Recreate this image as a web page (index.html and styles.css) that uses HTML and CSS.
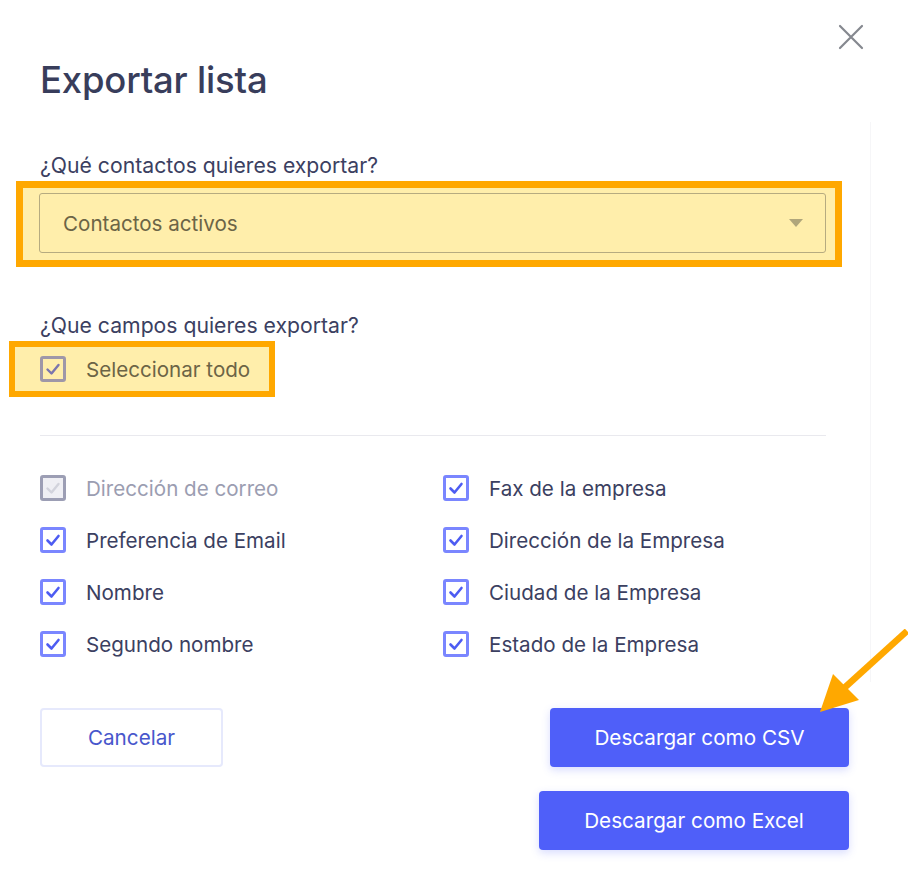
FILE: index.html
```html
<!DOCTYPE html>
<html lang="es">
<head>
<meta charset="utf-8">
<title>Exportar lista</title>
<link rel="stylesheet" href="styles.css">
</head>
<body>
<div class="modal">
  <button class="close" aria-label="Cerrar">
    <svg width="26" height="26" viewBox="0 0 26 26"><path d="M2 2 L24 24 M24 2 L2 24" stroke="#85888f" stroke-width="2.2" stroke-linecap="round" fill="none"/></svg>
  </button>
  <div class="edge-line"></div>

  <h1 class="title">Exportar lista</h1>

  <div class="label label-first">¿Qué contactos quieres exportar?</div>
  <div class="hl hl-select">
    <div class="select">
      <span>Contactos activos</span>
      <span class="caret"></span>
    </div>
  </div>

  <div class="label label-second">¿Que campos quieres exportar?</div>
  <div class="hl hl-all">
    <span class="cb cb-all"><svg viewBox="0 0 20 20"><path d="M4.5 10.5 L8.5 14.5 L15.5 6" fill="none" stroke="#7b76ad" stroke-width="2.4" stroke-linecap="round" stroke-linejoin="round"/></svg></span>
    <span class="hl-text">Seleccionar todo</span>
  </div>

  <div class="divider"></div>

  <div class="grid">
    <div class="item disabled"><span class="cb cb-dis"><svg viewBox="0 0 20 20"><path d="M4.5 10.5 L8.5 14.5 L15.5 6" fill="none" stroke="#d2d3dc" stroke-width="2.4" stroke-linecap="round" stroke-linejoin="round"/></svg></span>Dirección de correo</div>
    <div class="item"><span class="cb"><svg viewBox="0 0 20 20"><path d="M4.5 10.5 L8.5 14.5 L15.5 6" fill="none" stroke="#4d5cf2" stroke-width="2.6" stroke-linecap="round" stroke-linejoin="round"/></svg></span>Fax de la empresa</div>
    <div class="item"><span class="cb"><svg viewBox="0 0 20 20"><path d="M4.5 10.5 L8.5 14.5 L15.5 6" fill="none" stroke="#4d5cf2" stroke-width="2.6" stroke-linecap="round" stroke-linejoin="round"/></svg></span>Preferencia de Email</div>
    <div class="item"><span class="cb"><svg viewBox="0 0 20 20"><path d="M4.5 10.5 L8.5 14.5 L15.5 6" fill="none" stroke="#4d5cf2" stroke-width="2.6" stroke-linecap="round" stroke-linejoin="round"/></svg></span>Dirección de la Empresa</div>
    <div class="item"><span class="cb"><svg viewBox="0 0 20 20"><path d="M4.5 10.5 L8.5 14.5 L15.5 6" fill="none" stroke="#4d5cf2" stroke-width="2.6" stroke-linecap="round" stroke-linejoin="round"/></svg></span>Nombre</div>
    <div class="item"><span class="cb"><svg viewBox="0 0 20 20"><path d="M4.5 10.5 L8.5 14.5 L15.5 6" fill="none" stroke="#4d5cf2" stroke-width="2.6" stroke-linecap="round" stroke-linejoin="round"/></svg></span>Ciudad de la Empresa</div>
    <div class="item"><span class="cb"><svg viewBox="0 0 20 20"><path d="M4.5 10.5 L8.5 14.5 L15.5 6" fill="none" stroke="#4d5cf2" stroke-width="2.6" stroke-linecap="round" stroke-linejoin="round"/></svg></span>Segundo nombre</div>
    <div class="item"><span class="cb"><svg viewBox="0 0 20 20"><path d="M4.5 10.5 L8.5 14.5 L15.5 6" fill="none" stroke="#4d5cf2" stroke-width="2.6" stroke-linecap="round" stroke-linejoin="round"/></svg></span>Estado de la Empresa</div>
  </div>

  <div class="actions">
    <button class="btn btn-cancel">Cancelar</button>
    <div class="primary-stack">
      <button class="btn btn-primary btn-csv">Descargar como CSV</button>
      <button class="btn btn-primary btn-excel">Descargar como Excel</button>
    </div>
  </div>

  <svg class="arrow" width="100" height="95" viewBox="0 0 100 95">
    <line x1="97" y1="2" x2="32" y2="61" stroke="#ffa800" stroke-width="6.5" stroke-linecap="butt"/>
    <polygon points="10,83 23,45 49,71" fill="#ffa800"/>
  </svg>
</div>
</body>
</html>
```

FILE: styles.css
```css
* { box-sizing: border-box; }

html, body {
  margin: 0;
  padding: 0;
  background: #ffffff;
}

body {
  font-family: Inter, "Noto Sans", "Liberation Sans", sans-serif;
  color: #3b4061;
  width: 908px;
  height: 877px;
  overflow: hidden;
}

.modal {
  position: relative;
  padding: 56px 0 0 40px;
  width: 908px;
  height: 877px;
}

.close {
  position: absolute;
  left: 838px;
  top: 24px;
  width: 26px;
  height: 26px;
  padding: 0;
  border: 0;
  background: transparent;
}
.close svg { display: block; }

.edge-line {
  position: absolute;
  left: 870px;
  top: 122px;
  width: 1px;
  height: 560px;
  background: #f6f6f8;
}

.title {
  margin: 0;
  font-size: 36.5px;
  font-weight: 500;
  line-height: 48px;
  color: #383d5b;
  letter-spacing: -0.2px;
}

.label {
  font-size: 21.2px;
  line-height: 26px;
  font-weight: 400;
  color: #3b4061;
}
.label-first { margin-top: 48px; }
.label-second { margin-top: 45px; }

.hl {
  background: #ffeeab;
  border: 7px solid #ffa800;
}

.hl-select {
  margin-left: -24px;
  width: 826px;
  height: 86px;
  margin-top: 3px;
  padding: 5px 9px 0 16px;
}

.select {
  height: 60px;
  border: 1px solid #b6ab80;
  border-radius: 3px;
  display: flex;
  align-items: center;
  justify-content: space-between;
  padding: 0 22px 0 23px;
  font-size: 20.6px;
  color: #6c6446;
}

.caret {
  width: 0;
  height: 0;
  border-left: 7px solid transparent;
  border-right: 7px solid transparent;
  border-top: 8px solid #b0a67b;
}

.hl-all {
  margin-left: -31px;
  margin-top: 3px;
  width: 266px;
  height: 56px;
  border-width: 6px;
  display: flex;
  align-items: center;
  padding-left: 25px;
  gap: 20px;
  font-size: 20.6px;
  color: #6c6446;
}

.cb {
  width: 26px;
  height: 26px;
  flex: none;
  border: 3px solid #7a86ff;
  border-radius: 3px;
  display: inline-flex;
  align-items: center;
  justify-content: center;
  background: #ffffff;
}
.cb svg { width: 20px; height: 20px; display: block; }

.cb-all {
  border-color: #9f97a8;
  background: transparent;
}

.cb-dis {
  border-color: #9c9eb4;
  background: #efeff4;
}

.divider {
  margin-top: 38px;
  width: 786px;
  height: 1px;
  background: #e9e9ee;
}

.grid {
  margin-top: 26px;
  display: grid;
  grid-template-columns: 403px 400px;
  grid-auto-rows: 52px;
}

.item {
  display: flex;
  align-items: center;
  gap: 20px;
  font-size: 20.6px;
  color: #3b4061;
}
.item.disabled { color: #9b9db1; }

.actions {
  margin-top: 38px;
  display: flex;
  justify-content: space-between;
  width: 809px;
}

.btn {
  font-family: inherit;
  font-size: 20.7px;
  height: 59px;
  border-radius: 4px;
  cursor: pointer;
}

.btn-cancel {
  width: 183px;
  background: #ffffff;
  border: 2px solid #e6e9fc;
  color: #4857cc;
}

.primary-stack {
  display: flex;
  flex-direction: column;
  align-items: flex-end;
  gap: 24px;
}

.btn-primary {
  background: #4f5ff9;
  color: #ffffff;
  border: 0;
  box-shadow: 0 3px 8px rgba(79, 95, 249, 0.22);
}
.btn-csv { width: 299px; }
.btn-excel { width: 310px; }

.arrow {
  position: absolute;
  left: 810px;
  top: 629px;
}
```
